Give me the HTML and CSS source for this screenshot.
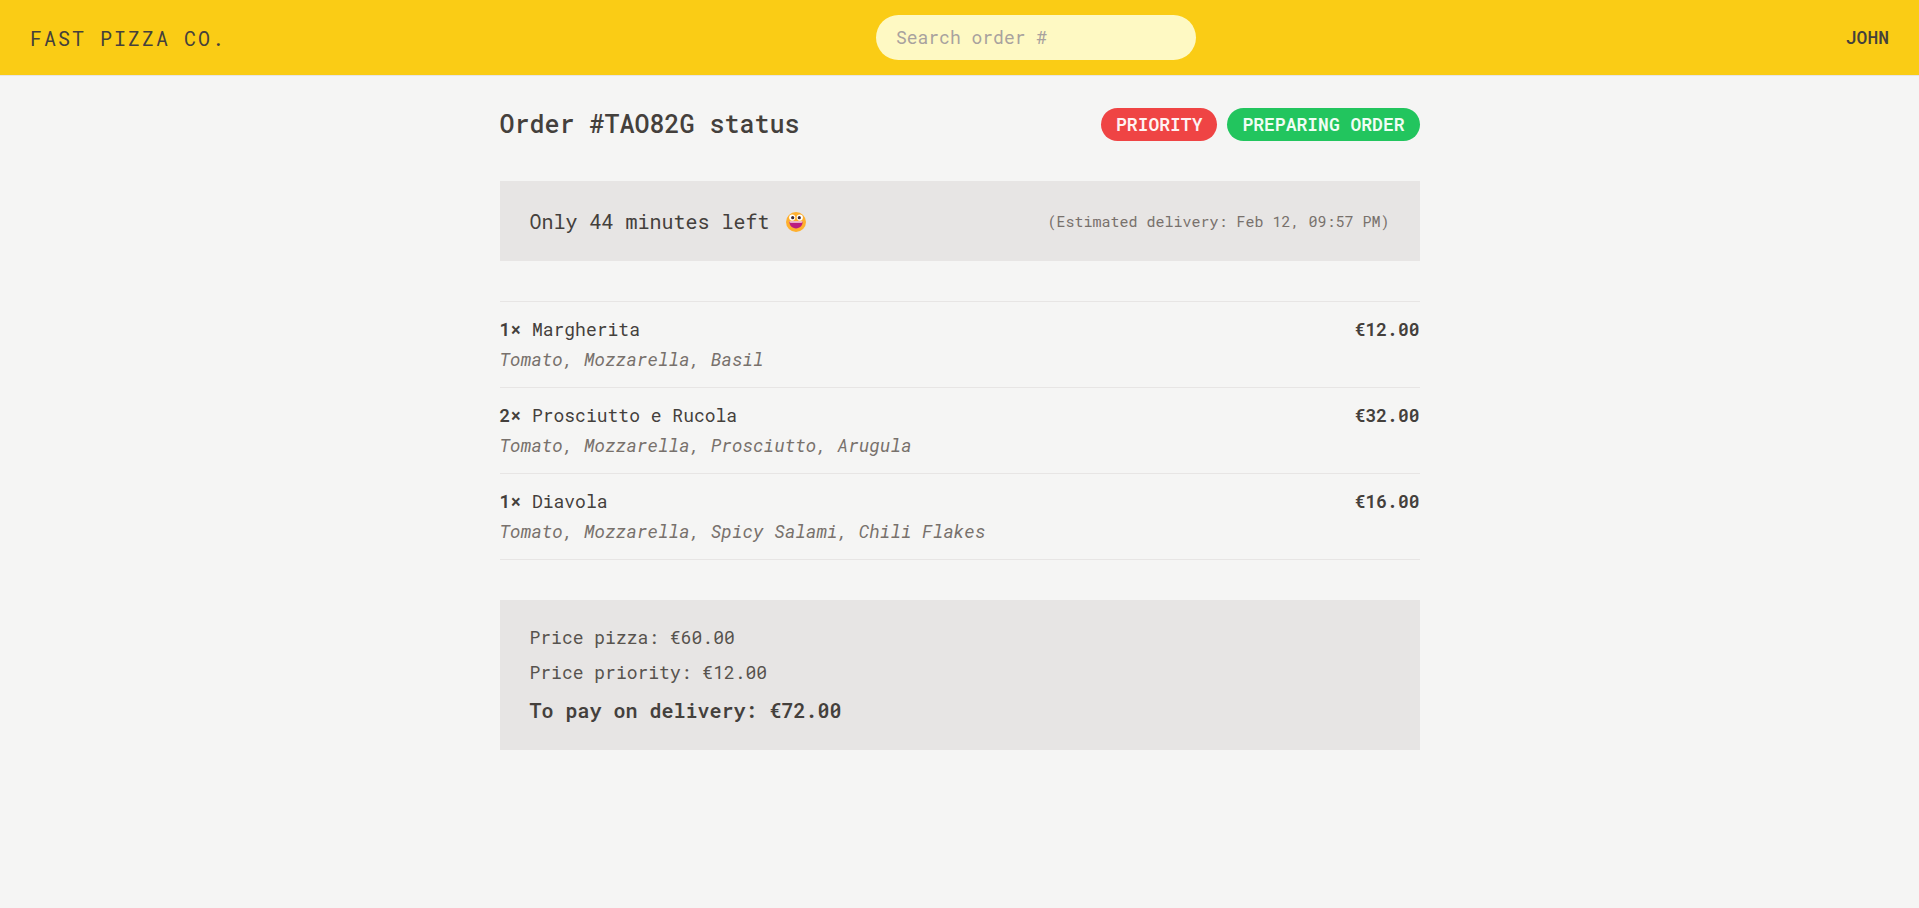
FILE: index.html
```html
<!DOCTYPE html>
<html lang="en">
<head>
<meta charset="utf-8">
<meta name="viewport" content="width=device-width, initial-scale=1">
<title>Fast Pizza Co.</title>
<link rel="stylesheet" href="styles.css">
</head>
<body>
<header class="header">
  <a class="logo" href="#">Fast Pizza Co.</a>
  <form class="search-form">
    <input class="search" type="text" placeholder="Search order #" aria-label="Search order number">
  </form>
  <p class="username">John</p>
</header>
<main class="order">
  <div class="order-head">
    <h1 class="title">Order #TAO82G status</h1>
    <div class="badges">
      <span class="badge badge-priority">Priority</span>
      <span class="badge badge-status">preparing order</span>
    </div>
  </div>

  <section class="panel eta">
    <p class="eta-left">Only 44 minutes left
      <svg class="emoji" viewBox="0 0 20 20" role="img" aria-label="grinning face">
        <circle cx="10" cy="10" r="10" fill="#ffb02e"/>
        <circle cx="6.2" cy="5.6" r="3.1" fill="#fff"/>
        <circle cx="13.8" cy="5.6" r="3.1" fill="#fff"/>
        <circle cx="6.7" cy="5.7" r="1.6" fill="#402a32"/>
        <circle cx="13.3" cy="5.7" r="1.6" fill="#402a32"/>
        <path d="M3.4 9.6H16.6C16.8 13.8 13.8 16.4 10 16.4S3.2 13.8 3.4 9.6Z" fill="#bb1d80"/>
        <path d="M3.6 9.3H16.4V10Q16.2 10.8 15.4 10.8H4.6Q3.8 10.8 3.6 10Z" fill="#f3d6e4"/>
      </svg>
    </p>
    <p class="eta-date">(Estimated delivery: Feb 12, 09:57 PM)</p>
  </section>

  <ul class="items">
    <li class="item">
      <div class="item-row">
        <p><span class="strong">1×</span> Margherita</p>
        <p class="strong">€12.00</p>
      </div>
      <p class="ingredients">Tomato, Mozzarella, Basil</p>
    </li>
    <li class="item">
      <div class="item-row">
        <p><span class="strong">2×</span> Prosciutto e Rucola</p>
        <p class="strong">€32.00</p>
      </div>
      <p class="ingredients">Tomato, Mozzarella, Prosciutto, Arugula</p>
    </li>
    <li class="item">
      <div class="item-row">
        <p><span class="strong">1×</span> Diavola</p>
        <p class="strong">€16.00</p>
      </div>
      <p class="ingredients">Tomato, Mozzarella, Spicy Salami, Chili Flakes</p>
    </li>
  </ul>

  <section class="panel summary">
    <p class="price">Price pizza: €60.00</p>
    <p class="price">Price priority: €12.00</p>
    <p class="total">To pay on delivery: €72.00</p>
  </section>
</main>
</body>
</html>
```
FILE: styles.css
```css
* {
  box-sizing: border-box;
  margin: 0;
  padding: 0;
}

body {
  min-height: 100vh;
  background: #f5f5f4;
  color: #44403c;
  font-family: "Roboto Mono", "Liberation Mono", monospace;
  font-size: 18px;
  line-height: 25px;
}

.header {
  display: flex;
  align-items: center;
  justify-content: space-between;
  gap: 20px;
  padding: 15px 30px;
  background: #facc15;
  border-bottom: 1px solid #e7e5e4;
  text-transform: uppercase;
}

.logo {
  color: inherit;
  font-size: 20px;
  font-weight: 400;
  letter-spacing: 2px;
  line-height: 30px;
  text-decoration: none;
}

.search {
  display: block;
  width: 320px;
  max-width: 100%;
  padding: 10px 20px;
  border: 0;
  border-radius: 999px;
  background: #fef9c3;
  color: inherit;
  font: inherit;
}

.search::placeholder {
  color: #a8a29e;
  opacity: 1;
}

.username {
  font-weight: 500;
}

.order {
  display: flex;
  flex-direction: column;
  gap: 40px;
  max-width: 960px;
  margin: 0 auto;
  padding: 30px 20px;
}

.order-head {
  display: flex;
  flex-wrap: wrap;
  align-items: end;
  justify-content: space-between;
  gap: 10px;
}

.title {
  font-size: 25px;
  font-weight: 500;
  line-height: 35px;
}

.badges {
  display: flex;
  gap: 10px;
}

.badge {
  padding: 4px 15px;
  border-radius: 999px;
  font-weight: 600;
  text-transform: uppercase;
}

.badge-priority {
  background: #ef4444;
  color: #fef2f2;
}

.badge-status {
  background: #22c55e;
  color: #f0fdf4;
}

.panel {
  padding: 25px 30px;
  background: #e7e5e4;
}

.eta {
  display: flex;
  flex-wrap: wrap;
  align-items: center;
  justify-content: space-between;
  gap: 10px;
}

.eta-left {
  font-size: 20px;
  font-weight: 400;
  line-height: 30px;
}

.emoji {
  width: 20px;
  height: 20px;
  margin-left: 4px;
  vertical-align: -3px;
}

.eta-date {
  color: #78716c;
  font-size: 15px;
}

.items {
  border-top: 1px solid #e7e5e4;
  border-bottom: 1px solid #e7e5e4;
  list-style: none;
}

.item {
  display: flex;
  flex-direction: column;
  gap: 5px;
  padding: 15px 0;
}

.item + .item {
  border-top: 1px solid #e7e5e4;
}

.item-row {
  display: flex;
  justify-content: space-between;
  gap: 20px;
}

.strong {
  font-weight: 600;
}

.ingredients {
  color: #78716c;
  font-style: italic;
}

.summary {
  display: flex;
  flex-direction: column;
  gap: 10px;
}

.price {
  color: #57534e;
  font-weight: 400;
}

.total {
  font-size: 20px;
  font-weight: 600;
  line-height: 30px;
}
```
